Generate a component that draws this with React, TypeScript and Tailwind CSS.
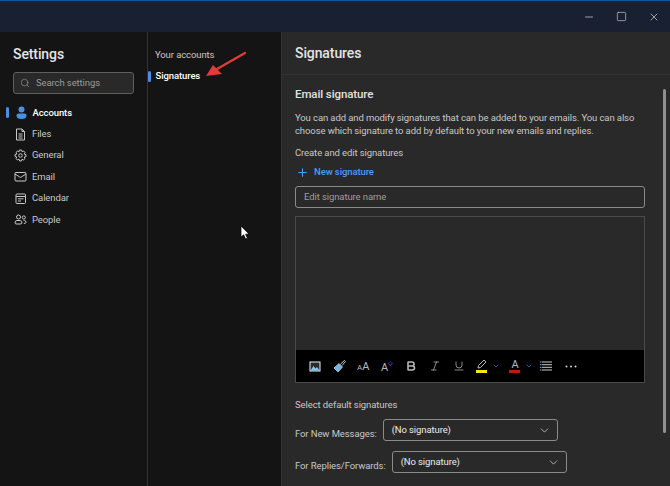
import { Bold, ChevronDown, Italic, Minus, Plus, Search, Square, Underline, X } from "lucide-react";
import type { ReactNode } from "react";

function NavIcon({ children }: { children: ReactNode }) {
  return (
    <svg width="13" height="13" viewBox="0 0 13 13" fill="none" stroke="#c8c8c8" strokeWidth="1">
      {children}
    </svg>
  );
}

const navItems = [
  {
    label: "Files",
    icon: (
      <NavIcon>
        <path d="M2.5 1 H8 L10.5 3.5 V12 H2.5 Z M8 1 V3.5 H10.5 M4.5 6 H8.5 M4.5 8 H8.5 M4.5 10 H8.5" />
      </NavIcon>
    ),
  },
  {
    label: "General",
    icon: (
      <NavIcon>
        <circle cx="6.5" cy="6.5" r="1.8" />
        <path d="M5.5 1 H7.5 L8 2.6 L9.6 2 L11 3.5 L10.2 5 L12 5.7 V7.5 L10.3 8 L11 9.6 L9.5 11 L8 10.2 L7.4 12 H5.6 L5 10.2 L3.4 11 L2 9.5 L2.8 8 L1 7.4 V5.6 L2.8 5 L2 3.4 L3.5 2 L5 2.8 Z" />
      </NavIcon>
    ),
  },
  {
    label: "Email",
    icon: (
      <NavIcon>
        <rect x="1" y="2.5" width="11" height="8.5" rx="1" />
        <path d="M1 4 L6.5 7.5 L12 4" />
      </NavIcon>
    ),
  },
  {
    label: "Calendar",
    icon: (
      <NavIcon>
        <rect x="2" y="2" width="9.5" height="9.5" rx="1" />
        <path d="M2 4.5 H11.5 M4 6.8 H9.5 M4 9 H7" />
      </NavIcon>
    ),
  },
  {
    label: "People",
    icon: (
      <NavIcon>
        <circle cx="4.5" cy="4" r="2" />
        <circle cx="9.8" cy="4.5" r="1.6" />
        <path d="M1 10 Q1 7.5 3 7.5 H6 Q8 7.5 8 10 Q8 11 6 11 H3 Q1 11 1 10 Z M9.5 7.5 H10.5 Q12 7.5 12 9.3 Q12 10.5 9.8 10.5" />
      </NavIcon>
    ),
  },
];

function SignatureSelect({ width }: { width: string }) {
  return (
    <div className={`${width} h-[22px] rounded-[3px] border border-[#8a8a8a] flex items-center justify-between pl-[8px] pr-[6px] text-[#ececec]`}>
      <span>(No signature)</span>
      <ChevronDown className="w-[13px] h-[13px] text-[#c8c8c8]" strokeWidth={1.5} />
    </div>
  );
}

export default function App() {
  return (
    <div className="relative w-[670px] h-[486px] overflow-hidden flex flex-col bg-[#141414] text-[9.5px] tracking-[-0.1px] text-[#c8c8c8]" style={{ fontFamily: "Roboto, sans-serif" }}>
      {/* title bar */}
      <div className="h-[32px] shrink-0 bg-[#192032] border-t border-[#0b5a9e] flex items-center justify-end text-[#c9c9c9]">
        <Minus className="w-[12px] h-[12px] mr-[20.5px]" strokeWidth={1.5} />
        <Square className="w-[11px] h-[11px] mr-[21.5px]" strokeWidth={1.5} />
        <X className="w-[12px] h-[12px] mr-[10px]" strokeWidth={1.5} />
      </div>

      <div className="flex-1 flex min-h-0">
        {/* settings nav */}
        <div className="w-[148px] shrink-0 border-r border-[#333333] pt-[10px]">
          <div className="pl-[13px] text-[14px] leading-[24px] font-medium text-[#e4e4e4]">Settings</div>
          <div className="mx-[13px] mt-[6px] h-[22px] rounded-[3px] bg-[#292929] border border-[#5f5f5f] flex items-center pl-[6px] gap-[6px] text-[#9a9a9a]">
            <Search className="w-[10px] h-[10px]" strokeWidth={1.5} />
            <span>Search settings</span>
          </div>
          <div className="mt-[8px] flex flex-col">
            <div className="h-[21.4px] flex items-center pl-[6px]">
              <div className="w-[2.5px] h-[11px] rounded-full bg-[#4a90e2]" />
              <svg width="13" height="13" viewBox="0 0 13 13" className="ml-[6.5px]" fill="#4a90e2">
                <circle cx="6.5" cy="3.5" r="3" />
                <path d="M1.5 9.5 Q1.5 7.5 3.5 7.5 H9.5 Q11.5 7.5 11.5 9.5 Q11.5 13 6.5 13 Q1.5 13 1.5 9.5 Z" />
              </svg>
              <span className="ml-[4.5px] font-medium text-white">Accounts</span>
            </div>
            {navItems.map((item) => (
              <div key={item.label} className="h-[21.4px] flex items-center pl-[14px]">
                {item.icon}
                <span className="ml-[5px]">{item.label}</span>
              </div>
            ))}
          </div>
        </div>

        {/* accounts sub nav */}
        <div className="w-[134px] shrink-0 border-r border-[#333333] pt-[12.5px]">
          <div className="h-[21px] flex items-center pl-[7px]">Your accounts</div>
          <div className="h-[21px] flex items-center">
            <div className="w-[2.5px] h-[11px] rounded-full bg-[#4a90e2]" />
            <span className="ml-[5px] font-medium text-white">Signatures</span>
          </div>
        </div>

        {/* main */}
        <div className="relative flex-1 min-w-0 bg-[#292929]">
          <div className="h-[43px] border-b border-[#323232] flex items-center pl-[13px] text-[14px] font-medium text-[#e4e4e4]">Signatures</div>
          <div className="pl-[13px] pr-[25px]">
            <div className="mt-[10px] text-[11.5px] leading-[18px] font-medium text-[#e2e2e2]">Email signature</div>
            <p className="mt-[8px] leading-[13px]">You can add and modify signatures that can be added to your emails. You can also choose which signature to add by default to your new emails and replies.</p>
            <div className="mt-[8.5px] leading-[13px]">Create and edit signatures</div>
            <div className="mt-[6.5px] h-[14px] flex items-center gap-[5px] text-[#4c9bf5] font-medium pl-[1px]">
              <Plus className="w-[13px] h-[13px]" strokeWidth={2} />
              <span>New signature</span>
            </div>
            <div className="mt-[7px] h-[22px] rounded-[3px] border border-[#8a8a8a] flex items-center pl-[8px] text-[#9d9d9d]">Edit signature name</div>
            <div className="mt-[8px] h-[167px] border border-[#4a4a4a] flex flex-col">
              <div className="flex-1" />
              <div className="h-[32px] bg-black flex items-center pl-[13px] text-[#b8b8b8]">
                {/* picture */}
                <svg width="12" height="11" viewBox="0 0 12 11" className="mr-[12px]">
                  <rect x="0.5" y="0.5" width="11" height="10" fill="#f2f2f2" />
                  <rect x="1.5" y="1.5" width="9" height="8" fill="#2a2a2a" />
                  <path d="M1.5 9.5 L4.5 5 L6.5 7.5 L8 6 L10.5 9.5 Z" fill="#7ecbf0" />
                </svg>
                {/* brush */}
                <svg width="13" height="13" viewBox="0 0 13 13" className="mr-[11px]">
                  <path d="M7.5 4 L11.5 0.5 L12.5 1.5 L9 5.5" fill="none" stroke="#c8c8c8" strokeWidth="1" />
                  <path d="M6 3.5 L9.5 7 L5 12 L1 8 Z" fill="#6db8e8" stroke="#c8c8c8" strokeWidth="0.8" />
                </svg>
                <span className="w-[12px] mr-[12px] flex items-end leading-none">
                  <span className="text-[8px]">A</span>
                  <span className="text-[11px]">A</span>
                </span>
                <span className="w-[12px] mr-[12px] flex items-start leading-none">
                  <span className="text-[11px] mt-[2px]">A</span>
                  <span className="text-[6px] text-[#6db8e8]">◇</span>
                </span>
                <Bold className="w-[12px] h-[12px] mr-[12px]" strokeWidth={3.2} />
                <Italic className="w-[12px] h-[12px] mr-[12px]" strokeWidth={1.5} />
                <Underline className="w-[12px] h-[12px] mr-[11px]" strokeWidth={1.5} />
                <div className="relative w-[12px] h-[14px]">
                  <svg width="12" height="10" viewBox="0 0 12 10">
                    <path d="M2 9 L2.5 6.5 L8 1 L10 3 L4.5 8.5 Z" fill="none" stroke="currentColor" />
                  </svg>
                  <div className="absolute bottom-0 left-0 w-[11px] h-[3px] bg-[#f3ea00]" />
                </div>
                <ChevronDown className="w-[8px] h-[8px] ml-[4px] mr-[9px] text-[#2f7fd8]" strokeWidth={2} />
                <div className="relative w-[12px] h-[14px] flex justify-center">
                  <span className="text-[11px] leading-[11px]">A</span>
                  <div className="absolute bottom-0 left-0 w-[11px] h-[3px] bg-[#c01818]" />
                </div>
                <ChevronDown className="w-[8px] h-[8px] ml-[4px] mr-[7px] text-[#2f7fd8]" strokeWidth={2} />
                {/* list */}
                <svg width="12" height="10" viewBox="0 0 12 10" className="mr-[13px]" stroke="#c8c8c8" strokeWidth="1">
                  <path d="M2 1 H12 M2 3.7 H12 M2 6.3 H12 M2 9 H12" />
                  <path d="M0 1 H1.5 M0 3.7 H1.5 M0 6.3 H1.5 M0 9 H1.5" stroke="#6db8e8" />
                </svg>
                <svg width="12" height="3" viewBox="0 0 12 3" fill="#d8d8d8">
                  <circle cx="1.5" cy="1.5" r="1" />
                  <circle cx="6" cy="1.5" r="1" />
                  <circle cx="10.5" cy="1.5" r="1" />
                </svg>
              </div>
            </div>
            <div className="mt-[14.5px] leading-[13px]">Select default signatures</div>
            <div className="mt-[8.5px] flex items-end">
              <span className="mr-[6px] leading-[14px]">For New Messages:</span>
              <SignatureSelect width="w-[175px]" />
            </div>
            <div className="mt-[10px] flex items-end">
              <span className="mr-[6px] leading-[14px]">For Replies/Forwards:</span>
              <SignatureSelect width="w-[175px]" />
            </div>
          </div>
          {/* scrollbar */}
          <div className="absolute right-[4.5px] top-[57px] w-[3px] h-[344px] rounded-full bg-[#8f8f8f]" />
        </div>
      </div>

      {/* red annotation arrow */}
      <svg className="absolute left-[200px] top-[48px]" width="50" height="32" viewBox="0 0 50 32">
        <path d="M45 5 L17 21" stroke="#e63a3a" strokeWidth="2.2" strokeLinecap="round" />
        <path d="M6 28 L13 17 L22 26 Z" fill="#e63a3a" />
      </svg>

      {/* mouse cursor */}
      <svg className="absolute left-[240px] top-[225px]" width="11" height="16" viewBox="0 0 11 16">
        <path d="M1 1 L1 12 L3.7 9.8 L5.6 14 L7.4 13.2 L5.6 9.2 L9 9 Z" fill="#ffffff" stroke="#000000" strokeWidth="0.7" />
      </svg>
    </div>
  );
}
